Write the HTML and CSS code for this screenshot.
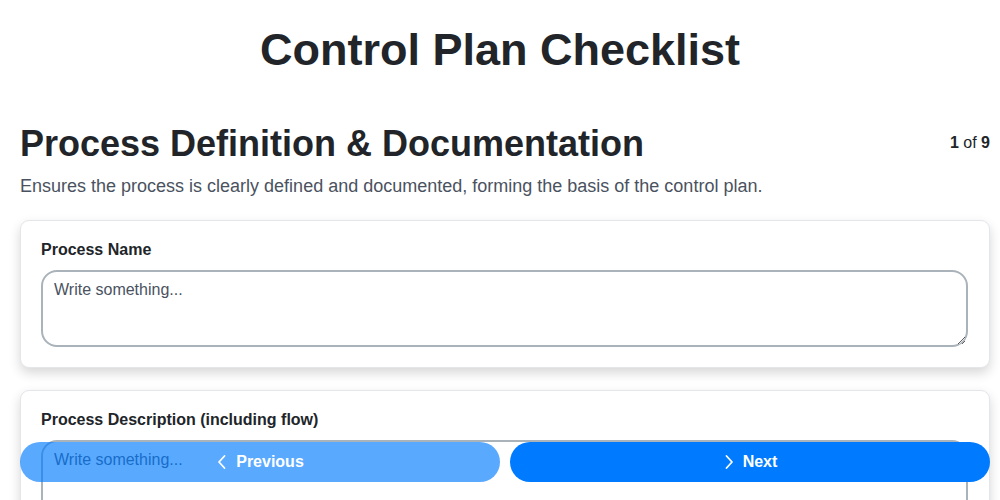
FILE: index.html
```html
<!DOCTYPE html>
<html lang="en">
<head>
<meta charset="utf-8">
<title>Control Plan Checklist</title>
<link rel="stylesheet" href="styles.css">
</head>
<body>
<div class="page">
  <h1 class="title">Control Plan Checklist</h1>
  <div class="section-head">
    <h2 class="section-title">Process Definition &amp; Documentation</h2>
    <div class="counter"><b>1</b> of <b>9</b></div>
  </div>
  <p class="section-desc">Ensures the process is clearly defined and documented, forming the basis of the control plan.</p>
  <div class="card">
    <label class="field-label">Process Name</label>
    <textarea class="field-input" placeholder="Write something..."></textarea>
  </div>
  <div class="card">
    <label class="field-label">Process Description (including flow)</label>
    <textarea class="field-input" placeholder="Write something..."></textarea>
  </div>
  <div class="card">
    <label class="field-label">Process Owner</label>
    <textarea class="field-input" placeholder="Write something..."></textarea>
  </div>
</div>
<div class="nav">
  <button class="nav-btn prev" type="button">
    <svg class="chev" width="12" height="16" viewBox="0 0 12 16"><path d="M8.5 2 L3 8 L8.5 14" fill="none" stroke="#fff" stroke-width="1.8" stroke-linecap="round" stroke-linejoin="round"/></svg>
    Previous
  </button>
  <button class="nav-btn next" type="button">
    <svg class="chev" width="12" height="16" viewBox="0 0 12 16"><path d="M3.5 2 L9 8 L3.5 14" fill="none" stroke="#fff" stroke-width="1.8" stroke-linecap="round" stroke-linejoin="round"/></svg>
    Next
  </button>
</div>
</body>
</html>
```
FILE: styles.css
```css
html, body {
  margin: 0;
  padding: 0;
  background: #fff;
}
body {
  font-family: "Liberation Sans", Arial, sans-serif;
  color: #212529;
}
.page {
  padding: 0 10px 80px 20px;
}
.title {
  margin: 24px 0 0 -10px;
  font-size: 45px;
  line-height: 52px;
  font-weight: 700;
  text-align: center;
  color: #212529;
}
.section-head {
  display: flex;
  justify-content: space-between;
  align-items: flex-start;
  margin-top: 47px;
}
.section-title {
  margin: 0;
  font-size: 36px;
  line-height: 41px;
  font-weight: 700;
  color: #212529;
}
.counter {
  font-size: 16px;
  line-height: 20px;
  margin-top: 10px;
  color: #212529;
}
.section-desc {
  margin: 12px 0 0;
  font-size: 18px;
  line-height: 21px;
  color: #4a5260;
}
.card {
  margin-top: 23px;
  border: 1px solid #e4e6ea;
  border-radius: 9px;
  background: #fff;
  padding: 20px;
  box-shadow: 0 5px 12px rgba(0, 0, 0, 0.16);
  display: flex;
  flex-direction: column;
}
.card + .card {
  margin-top: 22px;
}
.field-label {
  font-size: 16px;
  line-height: 18px;
  font-weight: 700;
  color: #212529;
  margin-bottom: 11px;
}
.field-input {
  box-sizing: border-box;
  height: 77px;
  width: calc(100% - 1px);
  border: 2px solid #aab2ba;
  border-radius: 16px;
  padding: 8px 11px;
  font-family: "Liberation Sans", Arial, sans-serif;
  font-size: 16px;
  line-height: 19px;
  color: #212529;
  background: #fff;
  resize: vertical;
}
.field-input::placeholder {
  color: #4a5260;
  opacity: 1;
}
.nav {
  position: fixed;
  left: 20px;
  right: 10px;
  bottom: 18px;
  display: flex;
  gap: 10px;
}
.nav-btn {
  flex: 1;
  height: 40px;
  border: none;
  border-radius: 20px;
  background: #007bff;
  color: #fff;
  font-family: "Liberation Sans", Arial, sans-serif;
  font-size: 16px;
  font-weight: 700;
  display: flex;
  align-items: center;
  justify-content: center;
  gap: 8px;
  padding: 0;
}
.nav-btn.prev {
  opacity: 0.65;
}
.chev {
  display: block;
}
```
